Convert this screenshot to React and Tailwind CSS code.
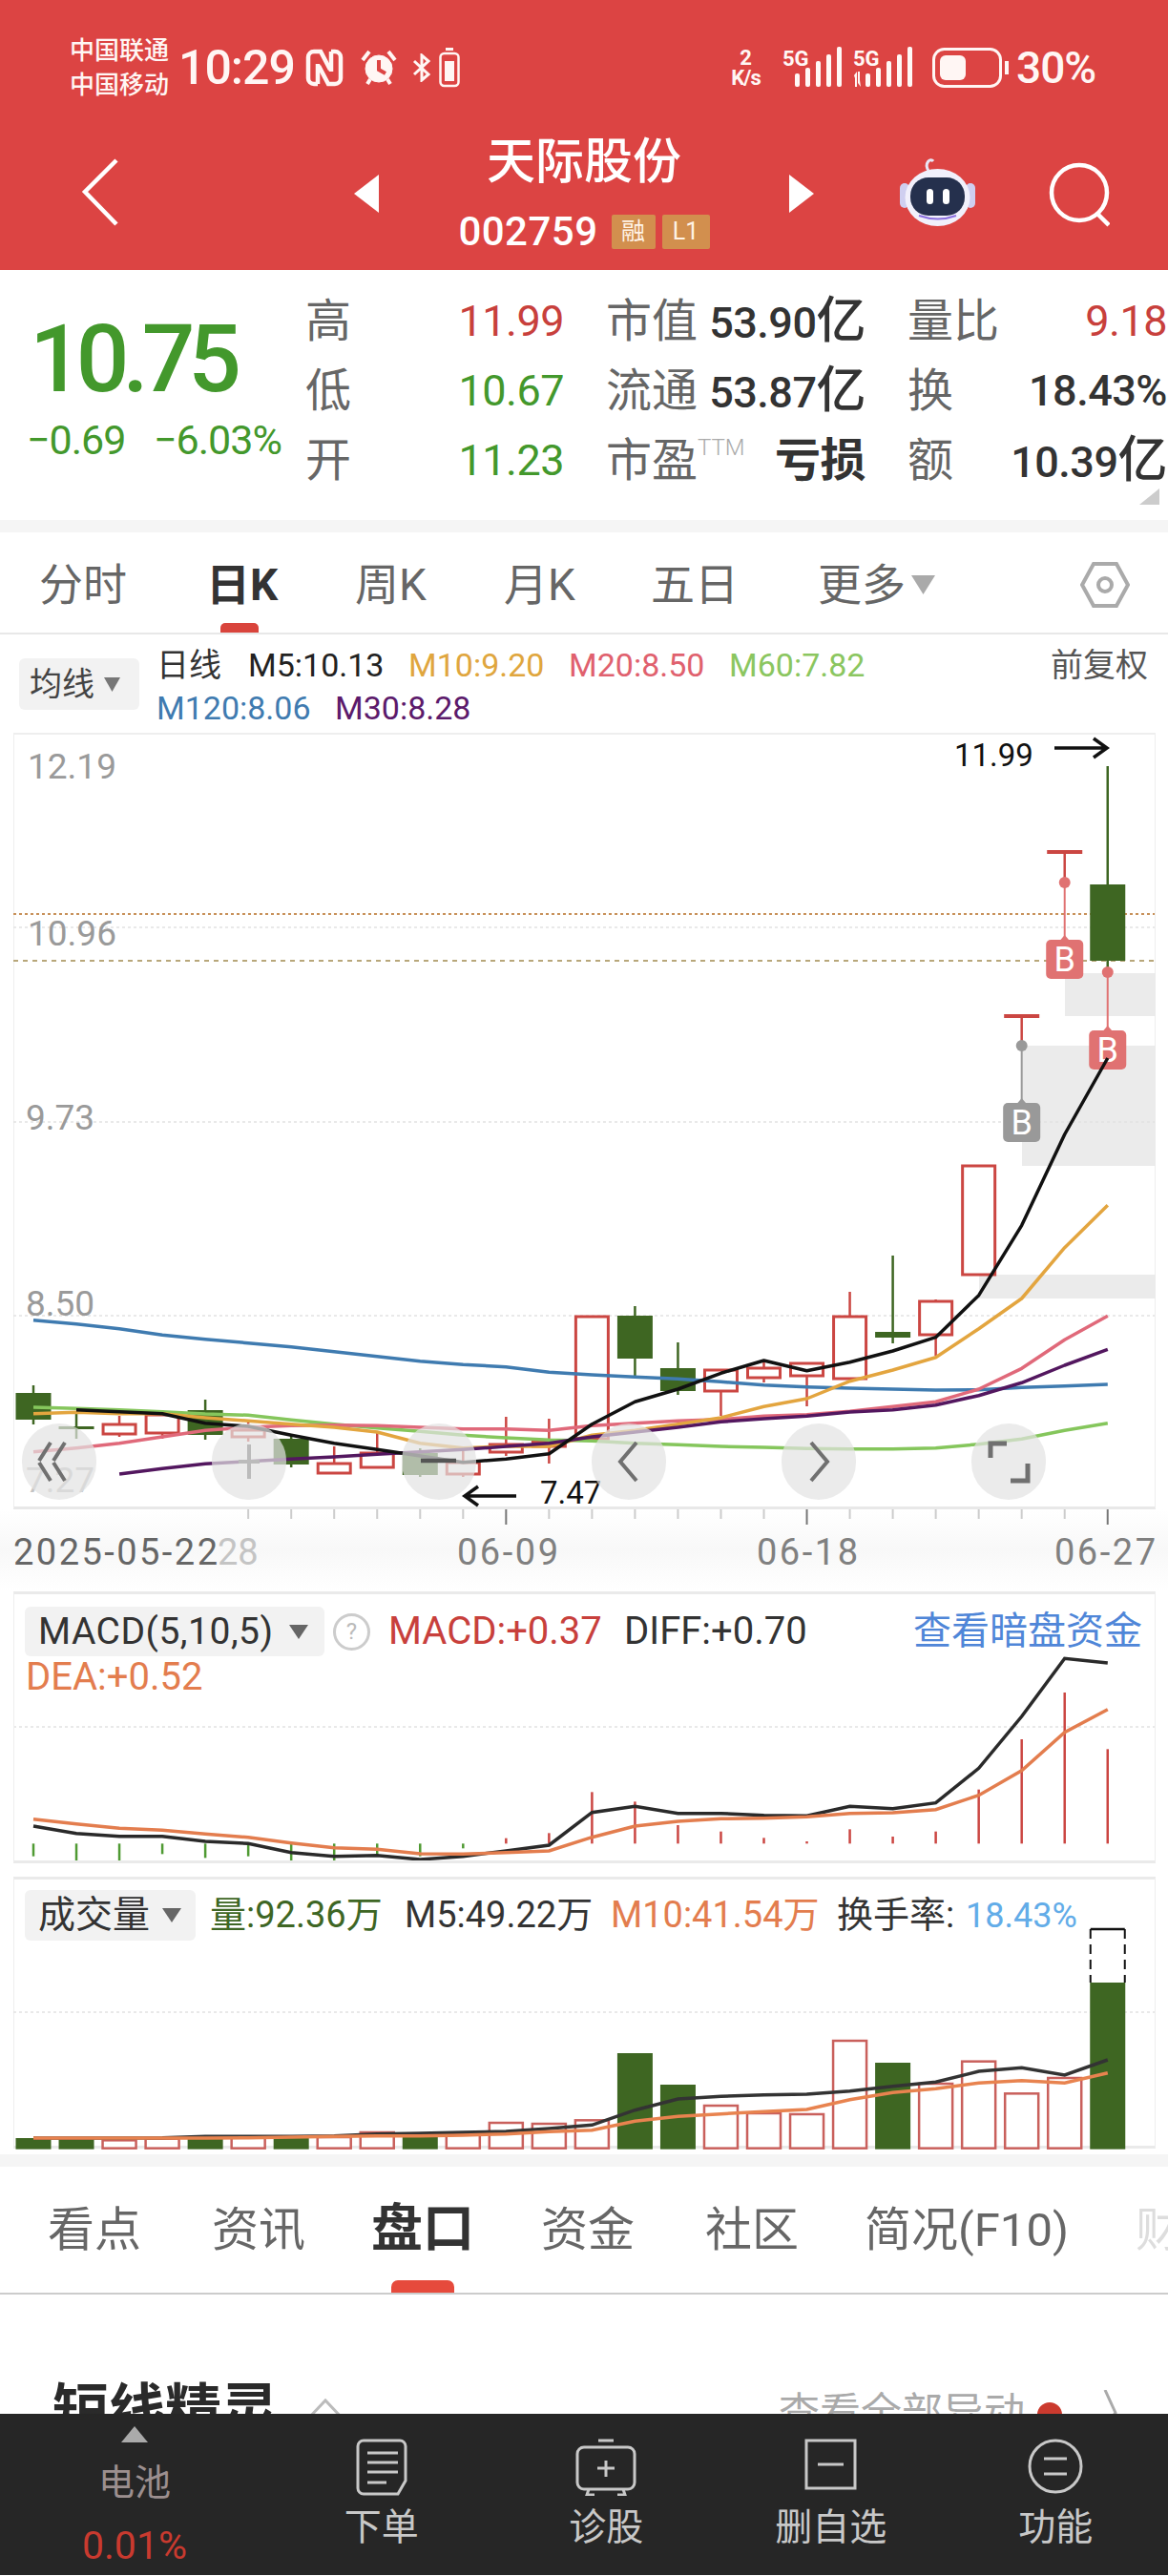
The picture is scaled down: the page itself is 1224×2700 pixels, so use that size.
import React from 'react'

const RED = '#cb4642'
const GREEN = '#3e6622'
const cx = (i) => 35 + 45.03 * i
const line = (arr, y0, from = 0) => arr.map((z, i) => `${cx(i + from).toFixed(1)},${(y0 + z / 3).toFixed(1)}`).join(' ')

// 主图均线 (y 以 1250 为基准, 放大3倍的读数)
const M5 = [672, 680, 686, 692, 722, 732, 760, 785, 805, 825, 845, 835, 818, 725, 655, 615, 565, 525, 557, 530, 495, 452, 320, 100, -186, -426]
const M10 = [692, 688, 692, 692, 705, 715, 725, 735, 750, 785, 800, 795, 795, 760, 745, 725, 705, 670, 645, 590, 555, 515, 425, 330, 170, 37]
const M20 = [812, 800, 785, 765, 745, 735, 730, 728, 730, 735, 740, 740, 745, 730, 722, 715, 710, 700, 695, 685, 670, 655, 615, 550, 460, 385]
const M30 = [882, 865, 850, 842, 835, 828, 820, 812, 805, 795, 785, 765, 750, 735, 718, 708, 700, 687, 680, 665, 635, 595, 540, 490]
const M120 = [398, 410, 425, 445, 458, 470, 482, 497, 512, 527, 538, 545, 562, 570, 577, 583, 592, 602, 608, 612, 615, 618, 617, 610, 605, 600]
const M60 = [672, 676, 680, 686, 693, 697, 712, 725, 737, 748, 760, 768, 775, 778, 785, 790, 795, 798, 802, 803, 803, 800, 788, 772, 745, 722]

// [index, bodyTop, bodyBottom, wickTop, wickBottom, up]
const candles = [
  [0, 1459, 1487, 1451, 1492, false],
  [1, 1494, 1497, 1480, 1507, false],
  [2, 1492, 1502, 1483, 1505, true],
  [3, 1482, 1501, 1477, 1507, true],
  [4, 1477, 1503, 1466, 1508, false],
  [5, 1498, 1505, 1490, 1510, true],
  [6, 1507, 1534, 1502, 1537, false],
  [7, 1533, 1543, 1515, 1543, true],
  [8, 1522, 1537, 1500, 1537, true],
  [9, 1522, 1545, 1517, 1547, false],
  [10, 1532, 1544, 1520, 1547, true],
  [11, 1513, 1521, 1484, 1525, true],
  [12, 1510, 1515, 1486, 1533, true],
  [13, 1379, 1507, 1379, 1507, true],
  [14, 1378, 1423, 1368, 1441, false],
  [15, 1433, 1457, 1406, 1461, false],
  [16, 1435, 1457, 1435, 1483, true],
  [17, 1433, 1443, 1425, 1448, true],
  [18, 1428, 1441, 1428, 1473, true],
  [19, 1379, 1444, 1353, 1444, true],
  [20, 1395, 1401, 1315, 1407, false],
  [21, 1363, 1398, 1361, 1420, true],
  [22, 1221, 1335, 1221, 1335, true],
  [25, 926, 1006, 802, 1018, false],
]

const macdDiff = [765, 788, 797, 797, 813, 820, 848, 860, 857, 870, 860, 843, 825, 722, 703, 725, 725, 731, 733, 703, 710, 692, 583, 420, 238, 252]
const macdDea = [743, 758, 772, 778, 790, 800, 818, 833, 838, 852, 853, 848, 843, 800, 765, 750, 742, 740, 736, 725, 723, 713, 668, 590, 470, 398]
const macdBars = [860, 878, 873, 853, 865, 860, 878, 878, 855, 860, 835, 803, 787, 658, 688, 762, 782, 802, 813, 775, 798, 782, 650, 492, 345, 523]

const volBars = [873, 873, 880, 875, 870, 870, 868, 870, 855, 860, 862, 825, 828, 817, 606, 705, 771, 795, 798, 567, 636, 702, 632, 733, 684, 384]
const volUp = [0, 0, 1, 1, 0, 1, 0, 1, 1, 0, 1, 1, 1, 1, 0, 0, 1, 1, 1, 1, 0, 1, 1, 1, 1, 0]
const volM5 = [873, 873, 873, 872, 868, 868, 868, 866, 860, 858, 855, 852, 843, 832, 785, 750, 742, 737, 735, 725, 710, 697, 663, 652, 675, 627]
const volM10 = [873, 873, 873, 873, 873, 872, 870, 868, 866, 866, 864, 860, 853, 848, 820, 805, 797, 790, 783, 752, 730, 718, 700, 692, 700, 668]

const Marker = ({ i, top, color, dot, lineColor, lineTop }) => (
  <g>
    <line x1={cx(i)} x2={cx(i)} y1={lineTop} y2={top} stroke={lineColor} strokeWidth="2" />
    <circle cx={cx(i)} cy={dot} r="6" fill={color} />
    <path d={`M${cx(i) - 6} ${top + 2}L${cx(i)} ${top - 5}L${cx(i) + 6} ${top + 2}Z`} fill={color} />
    <rect x={cx(i) - 19.5} y={top} width="39" height="41" rx="5" fill={color} />
    <text x={cx(i)} y={top + 33} textAnchor="middle" fontSize="36" fill="#fff">B</text>
  </g>
)

const MainChart = () => (
  <svg className="absolute inset-0 overflow-visible" width="1195" height="811" viewBox="15 769 1195 811">
    <rect x="1116" y="1019" width="95" height="45" fill="#ebebeb" />
    <rect x="1071" y="1095" width="140" height="126" fill="#ebebeb" />
    <rect x="1026" y="1335" width="185" height="25" fill="#ebebeb" />
    <g stroke="#e2e2e2" strokeWidth="1.5" strokeDasharray="3 3">
      <line x1="14" x2="1210" y1="971" y2="971" />
      <line x1="14" x2="1210" y1="1175" y2="1175" />
      <line x1="14" x2="1210" y1="1378" y2="1378" />
    </g>
    <line x1="14" x2="1210" y1="957" y2="957" stroke="#c8915a" strokeWidth="2" strokeDasharray="3 3" />
    <line x1="14" x2="1210" y1="1006" y2="1006" stroke="#b8a77a" strokeWidth="2" strokeDasharray="5 5" />
    <g fill="#9a9a9a" fontSize="37">
      <text x="29" y="815">12.19</text>
      <text x="29" y="990">10.96</text>
      <text x="27" y="1183">9.73</text>
      <text x="27" y="1378">8.50</text>
      <text x="27" y="1563" fill="#c4c4c4">7.27</text>
    </g>
    {candles.map(([i, t, b, wt, wb, up]) => (
      <g key={i}>
        <line x1={cx(i)} x2={cx(i)} y1={wt} y2={wb} stroke={up ? RED : GREEN} strokeWidth="2.5" />
        {up ? (
          <rect x={cx(i) - 17} y={t} width="34" height={b - t} fill="#fff" stroke={RED} strokeWidth="3" />
        ) : (
          <rect x={cx(i) - 18.5} y={t} width="37" height={b - t} fill={GREEN} />
        )}
      </g>
    ))}
    <rect x={cx(23) - 18.5} y="1062" width="37" height="4" fill={RED} />
    <line x1={cx(23)} x2={cx(23)} y1="1064" y2="1095" stroke={RED} strokeWidth="2.5" />
    <rect x={cx(24) - 18.5} y="890" width="37" height="4" fill={RED} />
    <line x1={cx(24)} x2={cx(24)} y1="892" y2="924" stroke={RED} strokeWidth="2.5" />
    <Marker i={23} top={1155} color="#999999" lineColor="#999999" dot={1095} lineTop={1095} />
    <Marker i={24} top={984} color="#e07272" lineColor="#e07272" dot={924} lineTop={924} />
    <Marker i={25} top={1079} color="#e07272" lineColor="#e07272" dot={1018} lineTop={1018} />
    <g fill="none" strokeWidth="3.5" strokeLinejoin="round">
      <polyline points={line(M120, 1250)} stroke="#3f7bb0" />
      <polyline points={line(M60, 1250)} stroke="#85c65c" />
      <polyline points={line(M20, 1250)} stroke="#e0697a" />
      <polyline points={line(M10, 1250)} stroke="#e3a53f" />
      <polyline points={line(M30, 1250, 2)} stroke="#53175f" />
      <polyline points={line(M5, 1250).split(' ').slice(1).join(' ')} stroke="#111111" />
    </g>
    <text x="1000" y="802" fontSize="33" fill="#111">11.99</text>
    <path d="M1105 783H1160M1146 773L1160 783L1146 793" fill="none" stroke="#111" strokeWidth="3.5" />
    <path d="M541 1567H487M501 1557L487 1567L501 1577" fill="none" stroke="#111" strokeWidth="3.5" />
    <text x="566" y="1575" fontSize="33" fill="#111">7.47</text>
  </svg>
)

const OverlayIcon = ({ children }) => (
  <div className="w-[78px] h-[80px] rounded-full bg-[#e2e2e2]/70">
    <svg width="78" height="80" viewBox="0 0 78 80" fill="none" stroke="#707070" strokeWidth="4">{children}</svg>
  </div>
)

const Hexagon = () => (
  <svg width="52" height="50" viewBox="0 0 52 50" fill="none" stroke="#aaaaaa" strokeWidth="4">
    <path d="M14 3H38L50 25L38 47H14L2 25Z" />
    <circle cx="26" cy="25" r="7" />
  </svg>
)

const Robot = () => (
  <svg width="79" height="72" viewBox="0 0 79 72">
    <path d="M30 14C25 6 32 0 35 4" fill="none" stroke="#e8e6f5" strokeWidth="3" />
    <rect x="0" y="27" width="10" height="26" rx="5" fill="#cfcff0" />
    <rect x="69" y="27" width="10" height="26" rx="5" fill="#cfcff0" />
    <ellipse cx="39.5" cy="42" rx="34" ry="30" fill="#f1f0fb" />
    <rect x="11" y="21" width="57" height="40" rx="19" fill="#25304d" />
    <path d="M20 61Q40 68 59 61" fill="none" stroke="#8b6fe0" strokeWidth="2" />
    <rect x="28" y="33" width="7" height="16" rx="3.5" fill="#fff" />
    <rect x="45" y="33" width="7" height="16" rx="3.5" fill="#fff" />
  </svg>
)

const Signal = ({ arrows }) => (
  <svg width="66" height="44" viewBox="0 0 66 44" fill="#fff8f6">
    <text x="0" y="20" fontSize="22" fontWeight="700" fill="#fff8f6">5G</text>
    {arrows && <path d="M1 30L4 26V42H2V33ZM8 42L5 38V26H7V35Z" />}
    <rect x="13" y="28" width="5" height="14" rx="2" />
    <rect x="24" y="22" width="5" height="20" rx="2" />
    <rect x="35" y="15" width="5" height="27" rx="2" />
    <rect x="46" y="8" width="5" height="34" rx="2" />
    <rect x="57" y="0" width="5" height="42" rx="2" />
  </svg>
)

const StatusBar = () => (
  <div className="flex items-center h-[142px] pl-[73px] text-[#fff6f4]">
    <div className="w-[114px] shrink-0 text-[26px] leading-[36px] font-medium whitespace-nowrap">
      <div>中国联通</div>
      <div>中国移动</div>
    </div>
    <div className="w-[133px] shrink-0 text-[50px] leading-none tracking-[-1px] font-medium">10:29</div>
    <svg width="40" height="40" viewBox="0 0 40 40" fill="none" stroke="#fff6f4" strokeWidth="4.5">
      <path d="M13 37H9A6 6 0 0 1 3 31V9A6 6 0 0 1 9 3H16L26 22" />
      <path d="M27 3H31A6 6 0 0 1 37 9V31A6 6 0 0 1 31 37H24L14 18" />
      <path d="M13 37V16M27 3V24" />
    </svg>
    <svg className="ml-[17px]" width="40" height="40" viewBox="0 0 40 40" fill="none" stroke="#fff6f4">
      <circle cx="20" cy="21" r="14" fill="#fff6f4" />
      <path d="M20 12V22L27 26" stroke="#dc4443" strokeWidth="4" />
      <path d="M3 12L10 3M37 12L30 3M8 37L11 32M32 37L29 32" strokeWidth="4" />
    </svg>
    <svg className="ml-[15px]" width="20" height="30" viewBox="0 0 20 30" fill="none" stroke="#fff6f4" strokeWidth="3">
      <path d="M2 8L17 22L10 28V2L17 8L2 22" />
    </svg>
    <svg className="ml-[8px]" width="22" height="42" viewBox="0 0 22 42" fill="none" stroke="#fff6f4" strokeWidth="2.5">
      <rect x="1.5" y="6" width="19" height="34" rx="4" />
      <rect x="7" y="0" width="8" height="3" fill="#fff6f4" stroke="none" />
      <rect x="6" y="14" width="10" height="21" fill="#fff6f4" stroke="none" />
    </svg>
    <div className="ml-[278px] w-[43px] text-center font-bold text-[22px] leading-[21px]">
      <div>2</div>
      <div className="tracking-[-1px]">K/s</div>
    </div>
    <div className="ml-[17px]"><Signal /></div>
    <div className="ml-[8px]"><Signal arrows /></div>
    <svg className="ml-[17px]" width="81" height="42" viewBox="0 0 81 42" fill="none" stroke="#fff6f4" strokeWidth="3">
      <rect x="1.5" y="1.5" width="70" height="39" rx="11" />
      <rect x="8" y="8" width="27" height="26" rx="6" fill="#fff6f4" stroke="none" />
      <path d="M78 14V28" strokeWidth="4" />
    </svg>
    <div className="ml-[7px] text-[46px] leading-none tracking-[-1px] font-medium">30%</div>
  </div>
)

const NavBar = () => (
  <div className="flex items-start h-[141px] pl-[85px] text-white">
    <svg className="mt-[24px]" width="40" height="71" viewBox="0 0 40 71" fill="none" stroke="#fff" strokeWidth="4.5">
      <path d="M37 2L4 35L37 69" />
    </svg>
    <svg className="mt-[41px] ml-[246px]" width="26" height="40" viewBox="0 0 26 40" fill="#fff"><path d="M26 0V40L0 20Z" /></svg>
    <div className="w-[430px] flex flex-col items-center">
      <div className="text-[51px] leading-[56px] font-medium whitespace-nowrap">天际股份</div>
      <div className="flex items-center h-[38px] mt-[26px]">
        <span className="text-[42px] leading-none tracking-[0.5px] font-medium">002759</span>
        <span className="ml-[14px] w-[46px] h-[36px] rounded-[2px] bg-[#d28f4e] text-[25px] leading-[36px] text-center text-[#fff3e6]">融</span>
        <span className="ml-[7px] w-[50px] h-[36px] rounded-[2px] bg-[#d28f4e] text-[25px] leading-[36px] text-center text-[#fff3e6]">L1</span>
      </div>
    </div>
    <svg className="mt-[41px]" width="26" height="40" viewBox="0 0 26 40" fill="#fff"><path d="M0 0V40L26 20Z" /></svg>
    <div className="mt-[23px] ml-[90px]"><Robot /></div>
    <svg className="mt-[28px] ml-[76px]" width="65" height="68" viewBox="0 0 65 68" fill="none" stroke="#fff" strokeWidth="4.5">
      <circle cx="33" cy="32" r="29" />
      <path d="M52 54L64 66" />
    </svg>
  </div>
)

const Cell = ({ label, value, unit, valueClass, extra }) => (
  <div className="flex items-center justify-between h-[73px]">
    <span className="text-[#666666] text-[48px] leading-none whitespace-nowrap">{label}{extra}</span>
    <span className={`text-[45px] leading-none tracking-[-0.5px] whitespace-nowrap ${valueClass}`}>
      {value}
      {unit && <span className="text-[52px]">{unit}</span>}
    </span>
  </div>
)

const Quote = () => (
  <div className="relative flex h-[262px]">
    <div className="w-[320px] shrink-0">
      <div className="ml-[31px] mt-[46px] h-[96px] text-[98px] leading-[96px] font-medium tracking-[-7px] text-[#43982c]">10.75</div>
      <div className="flex mt-[16px] ml-[28px] h-[40px] text-[43px] leading-[40px] tracking-[-1px] text-[#43982c] whitespace-nowrap">
        <span className="w-[133px]">−0.69</span>
        <span>−6.03%</span>
      </div>
    </div>
    <div className="grid grid-cols-[271px_272px_272px] gap-x-[44px] mt-[17px] h-[219px]">
      <Cell label="高" value="11.99" valueClass="text-[#c8403c]" />
      <Cell label="市值" value="53.90" unit="亿" valueClass="text-[#333333] font-medium" />
      <Cell label="量比" value="9.18" valueClass="text-[#c8403c]" />
      <Cell label="低" value="10.67" valueClass="text-[#43982c]" />
      <Cell label="流通" value="53.87" unit="亿" valueClass="text-[#333333] font-medium" />
      <Cell label="换" value="18.43%" valueClass="text-[#333333] font-medium" />
      <Cell label="开" value="11.23" valueClass="text-[#43982c]" />
      <Cell label="市盈" extra={<sup className="text-[24px] text-[#aaaaaa] align-[10px] font-light">TTM</sup>} value="亏损" valueClass="text-[#333333] font-bold !text-[48px]" />
      <Cell label="额" value="10.39" unit="亿" valueClass="text-[#333333] font-medium" />
    </div>
    <svg className="absolute right-[9px] bottom-[16px]" width="21" height="17" viewBox="0 0 21 17" fill="#cccccc"><path d="M21 0V17H0Z" /></svg>
  </div>
)

const PeriodTabs = () => (
  <div className="relative flex items-center h-[107px] pt-[4px] pl-[41px] border-b-2 border-[#e8e8e8] text-[46px] leading-none text-[#666666] whitespace-nowrap">
    <span className="w-[175px] shrink-0">分时</span>
    <span className="w-[156px] shrink-0 font-bold text-[#333333]">日K</span>
    <span className="w-[156px] shrink-0">周K</span>
    <span className="w-[154px] shrink-0">月K</span>
    <span className="w-[175px] shrink-0">五日</span>
    <span className="w-[98px] shrink-0">更多</span>
    <svg width="25" height="20" viewBox="0 0 25 20" fill="#aaaaaa"><path d="M0 0H25L12.5 20Z" /></svg>
    <div className="ml-[152px]"><Hexagon /></div>
    <div className="absolute left-[231px] bottom-0 w-[40px] h-[10px] rounded-t-[5px] bg-[#d9443c]" />
  </div>
)

const Legend = () => (
  <div className="flex h-[103px] pl-[20px] text-[34px] leading-[45px] whitespace-nowrap">
    <div className="flex items-center mt-[25px] w-[126px] h-[54px] pl-[11px] rounded-[6px] bg-[#f2f2f2] text-[#444444]">
      <span className="w-[78px]">均线</span>
      <svg width="17" height="15" viewBox="0 0 17 15" fill="#777777"><path d="M0 0H17L8.5 15Z" /></svg>
    </div>
    <div className="flex-1 ml-[18px] pt-[10px]">
      <div className="flex gap-[28px] pr-[21px]">
        <span className="w-[68px] text-[#333333]">日线</span>
        <span className="w-[140px] text-[#222222]">M5:10.13</span>
        <span className="w-[140px] text-[#e0a63e]">M10:9.20</span>
        <span className="w-[140px] text-[#e0616e]">M20:8.50</span>
        <span className="w-[140px] text-[#8bc660]">M60:7.82</span>
        <span className="ml-auto text-[#555555]">前复权</span>
      </div>
      <div className="flex gap-[28px]">
        <span className="w-[159px] text-[#3f7bb0]">M120:8.06</span>
        <span className="text-[#5c1a6b]">M30:8.28</span>
      </div>
    </div>
  </div>
)

const Axis = () => (
  <div className="relative h-[86px] bg-gradient-to-b from-white via-[#f8f8f8] to-white">
    <svg className="absolute inset-0" width="1224" height="86" viewBox="0 1582 1224 86">
      {Array.from({ length: 21 }, (_, i) => i + 5).map((i) => {
        const major = i === 11 || i === 18 || i === 25
        return <line key={i} x1={cx(i)} x2={cx(i)} y1="1582" y2={major ? 1598 : 1592} stroke={major ? '#777777' : '#cccccc'} strokeWidth="2" />
      })}
      <g fontSize="38" fill="#808080">
        <text x="228" y="1640" fill="#c4c4c4">28</text>
        <text x="14" y="1640" fill="#666666" textLength="214">2025-05-22</text>
        <text x="479" y="1640" textLength="106">06-09</text>
        <text x="793" y="1640" textLength="106">06-18</text>
        <text x="1105" y="1640" textLength="106">06-27</text>
      </g>
    </svg>
  </div>
)

const MacdPanel = () => (
  <div className="relative ml-[14px] w-[1197px] h-[285px] border-x border-t-[3px] border-b-[3px] border-x-[#eeeeee] border-y-[#eaeaea] text-[40px] whitespace-nowrap">
    <svg className="absolute inset-0" width="1195" height="279" viewBox="15 1672 1195 279">
      <line x1="14" x2="1210" y1="1811" y2="1811" stroke="#e2e2e2" strokeWidth="1.5" strokeDasharray="3 3" />
      {macdBars.map((z, i) => (
        <line key={i} x1={cx(i)} x2={cx(i)} y1={1660 + Math.min(z, 820) / 3} y2={1660 + Math.max(z, 820) / 3} stroke={i < 11 ? '#4f9a33' : RED} strokeWidth="2.5" />
      ))}
      <polyline points={line(macdDiff, 1660)} fill="none" stroke="#2a2a2a" strokeWidth="3.5" />
      <polyline points={line(macdDea, 1660)} fill="none" stroke="#e37d4e" strokeWidth="3.5" />
    </svg>
    <div className="relative flex items-center pl-[11px] pt-[9px]">
      <div className="flex items-center w-[314px] shrink-0 h-[52px] pl-[14px] rounded-[6px] bg-[#f2f2f2] text-[#333333]">
        <span className="w-[263px] text-[39px] tracking-[0.5px] leading-none">MACD(5,10,5)</span>
        <svg width="20" height="15" viewBox="0 0 20 15" fill="#666666"><path d="M0 0H20L10 15Z" /></svg>
      </div>
      <div className="ml-[9px] w-[39px] h-[39px] rounded-full border-[3px] border-[#cccccc] text-[#bbbbbb] text-[24px] leading-[33px] text-center">?</div>
      <span className="ml-[19px] w-[247px] shrink-0 text-[#c8403c]">MACD:+0.37</span>
      <span className="text-[#333333]">DIFF:+0.70</span>
      <span className="ml-auto mr-[13px] text-[40px] text-[#4f86d8]">查看暗盘资金</span>
    </div>
    <div className="relative pl-[12px] leading-[36px] text-[#e37d4e]">DEA:+0.52</div>
  </div>
)

const VolumePanel = () => (
  <div className="relative ml-[14px] mt-[14px] w-[1197px] h-[285px] border-x border-t-[3px] border-b-[3px] border-x-[#eeeeee] border-y-[#eaeaea] text-[38px] whitespace-nowrap">
    <svg className="absolute inset-0 overflow-visible" width="1195" height="279" viewBox="15 1970 1195 279">
      <line x1="14" x2="1210" y1="2109" y2="2109" stroke="#e2e2e2" strokeWidth="1.5" strokeDasharray="3 3" />
      {volBars.map((z, i) =>
        volUp[i] ? (
          <rect key={i} x={cx(i) - 17.5} y={1950 + z / 3} width="35" height={(905 - z) / 3} fill="#fff" stroke="#c9605c" strokeWidth="2.5" />
        ) : (
          <rect key={i} x={cx(i) - 18.5} y={1950 + z / 3} width="37" height={(908 - z) / 3} fill={GREEN} />
        )
      )}
      <path d={`M${cx(25) - 18} 2022V2078M${cx(25) + 18} 2022V2078`} stroke="#111" strokeWidth="2" strokeDasharray="10 6" />
      <line x1={cx(25) - 18} x2={cx(25) + 18} y1="2022" y2="2022" stroke="#111" strokeWidth="2.5" />
      <polyline points={line(volM5, 1950)} fill="none" stroke="#333333" strokeWidth="3.5" />
      <polyline points={line(volM10, 1950)} fill="none" stroke="#e8834f" strokeWidth="3.5" />
    </svg>
    <div className="relative flex items-center pl-[11px] pt-[9px]">
      <div className="flex items-center w-[179px] shrink-0 h-[53px] pl-[14px] rounded-[6px] bg-[#f2f2f2] text-[#333333]">
        <span className="w-[130px] text-[39px] leading-none">成交量</span>
        <svg width="20" height="15" viewBox="0 0 20 15" fill="#666666"><path d="M0 0H20L10 15Z" /></svg>
      </div>
      <span className="ml-[15px] w-[204px] shrink-0 text-[#3e6624]">量:92.36万</span>
      <span className="w-[216px] shrink-0 text-[#333333]">M5:49.22万</span>
      <span className="w-[237px] shrink-0 text-[#e37d4e]">M10:41.54万</span>
      <span className="w-[135px] shrink-0 text-[#333333]">换手率:</span>
      <span className="text-[#62ace8] text-[36px]">18.43%</span>
    </div>
  </div>
)

const BottomTabs = () => (
  <div className="relative flex items-center h-[134px] pl-[50px] border-b-2 border-[#cccccc] text-[49px] leading-none text-[#666666] whitespace-nowrap overflow-hidden">
    <span className="w-[172px] shrink-0">看点</span>
    <span className="w-[167px] shrink-0">资讯</span>
    <span className="w-[178px] shrink-0 text-[54px] font-bold text-[#333333]">盘口</span>
    <span className="w-[172px] shrink-0">资金</span>
    <span className="w-[167px] shrink-0">社区</span>
    <span className="w-[284px] shrink-0">简况(F10)</span>
    <span className="shrink-0 text-[#dddddd]">财</span>
    <div className="absolute left-[410px] bottom-0 w-[66px] h-[13px] rounded-t-[7px] bg-[#e64a3c]" />
  </div>
)

const Spirit = () => (
  <div className="flex h-[125px] overflow-hidden pl-[55px] whitespace-nowrap">
    <div className="shrink-0 pt-[92px] text-[59px] leading-none font-bold text-[#2a2a2a]">短线精灵</div>
    <svg className="shrink-0 ml-[30px] mt-[108px]" width="40" height="24" viewBox="0 0 40 24" fill="none" stroke="#bbbbbb" strokeWidth="3"><path d="M2 22L20 3L38 22" /></svg>
    <div className="shrink-0 ml-[455px] pt-[103px] text-[43px] leading-none text-[#aaaaaa]">查看全部异动</div>
    <div className="shrink-0 ml-[13px] mt-[113px] w-[26px] h-[26px] rounded-full bg-[#cb3a2e]" />
    <svg className="shrink-0 ml-[43px] mt-[100px]" width="15" height="30" viewBox="0 0 15 30" fill="none" stroke="#aaaaaa" strokeWidth="3"><path d="M2 0L13 24L8 30" /></svg>
  </div>
)

const FootItem = ({ label, children }) => (
  <div className="w-[236px] flex flex-col items-center pt-[26px]">
    <div className="h-[62px]">{children}</div>
    <div className="mt-[11px] text-[39px] leading-[40px] text-[#c8c8c8] whitespace-nowrap">{label}</div>
  </div>
)

const Footer = () => (
  <div className="flex h-[169px] bg-[#262626]">
    <div className="w-[282px] shrink-0 flex flex-col items-center pt-[13px]">
      <svg width="28" height="17" viewBox="0 0 28 17" fill="#aaaaaa"><path d="M14 0L28 17H0Z" /></svg>
      <div className="mt-[20px] text-[38px] leading-[44px] text-[#9c8f8f]">电池</div>
      <div className="mt-[22px] text-[41px] leading-[44px] text-[#c93a2f]">0.01%</div>
    </div>
    <FootItem label="下单">
      <svg width="54" height="60" viewBox="0 0 54 60" fill="none" stroke="#c8c8c8" strokeWidth="3">
        <path d="M8 2H46A6 6 0 0 1 52 8V44L44 58H8A6 6 0 0 1 2 52V8A6 6 0 0 1 8 2Z" />
        <path d="M12 15H44M12 25H44M12 35H44M12 46H32" />
      </svg>
    </FootItem>
    <FootItem label="诊股">
      <svg width="64" height="60" viewBox="0 0 64 60" fill="none" stroke="#c8c8c8" strokeWidth="3">
        <path d="M24 2H40" />
        <rect x="2" y="9" width="60" height="44" rx="7" />
        <path d="M32 23V40M23 31H41M14 53L12 59H20M50 53L52 59H44" />
      </svg>
    </FootItem>
    <FootItem label="删自选">
      <svg width="55" height="54" viewBox="0 0 55 54" fill="none" stroke="#c8c8c8" strokeWidth="3">
        <rect x="2" y="2" width="51" height="50" />
        <path d="M14 27H41" />
      </svg>
    </FootItem>
    <FootItem label="功能">
      <svg width="58" height="58" viewBox="0 0 58 58" fill="none" stroke="#c8c8c8" strokeWidth="3">
        <circle cx="29" cy="29" r="27" />
        <path d="M17 21H41M17 37H41" />
      </svg>
    </FootItem>
  </div>
)

export default function App() {
  return (
    <div className="w-[1224px] h-[2700px] overflow-hidden bg-white font-[Roboto,'Noto_Sans_CJK_SC',sans-serif]">
      <div className="h-[283px] bg-[#dc4443]">
        <StatusBar />
        <NavBar />
      </div>
      <Quote />
      <div className="h-[13px] bg-[#f5f5f5]" />
      <PeriodTabs />
      <Legend />
      <div className="relative ml-[14px] w-[1197px] h-[814px] border-x border-t-2 border-b-[3px] border-x-[#eeeeee] border-t-[#eeeeee] border-b-[#e8e8e8]">
        <MainChart />
        <div className="absolute left-[8px] top-[722px] flex gap-[121px]">
          <OverlayIcon><path d="M18 39L30 20M18 41L30 60M33 39L45 20M33 41L45 60" /></OverlayIcon>
          <OverlayIcon><path d="M39 22V58M28 40H50" stroke="#bbbbbb" /></OverlayIcon>
          <OverlayIcon><path d="M20 39H57" stroke="#555555" strokeWidth="4.5" /></OverlayIcon>
          <OverlayIcon><path d="M47 20L30 40L47 60" /></OverlayIcon>
          <OverlayIcon><path d="M31 20L48 40L31 60" /></OverlayIcon>
          <OverlayIcon><path d="M20 36V21H37M59 42V60H41" strokeWidth="5" /></OverlayIcon>
        </div>
      </div>
      <Axis />
      <MacdPanel />
      <VolumePanel />
      <div className="mt-[6px] h-[13px] bg-[#f5f5f5]" />
      <BottomTabs />
      <Spirit />
      <Footer />
    </div>
  )
}
